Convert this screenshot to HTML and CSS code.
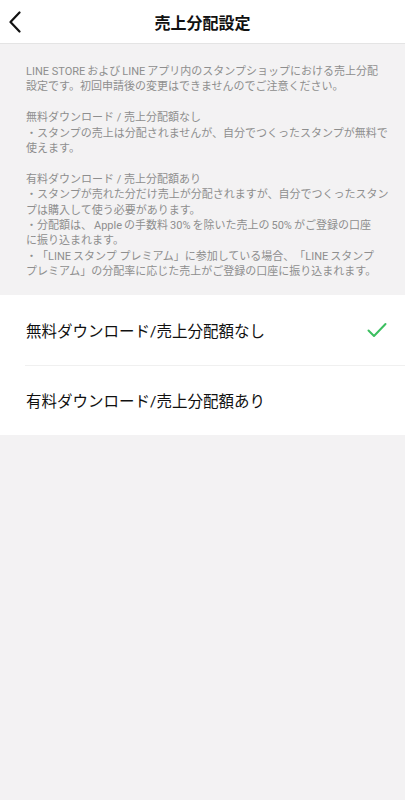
FILE: index.html
```html
<!DOCTYPE html>
<html lang="ja">
  <head>
    <meta name="viewport" content="width=device-width, initial-scale=1" />
    <link rel="stylesheet" href="styles.css">
  </head>
  <body>
    <header class="nav">
      <a class="nav-back" href="#">
        <svg width="14" height="22" viewBox="0 0 14 22">
          <path d="M11.5 1.5 L2.5 11 L11.5 20.5" fill="none" stroke="#111" stroke-width="2.2" stroke-linecap="round" stroke-linejoin="round" />
        </svg>
      </a>
      <h1 class="nav-title">売上分配設定</h1>
    </header>

    <div class="notice">
      <p><span class="lat first">LINE STORE</span>および<span class="lat">LINE</span>アプリ内のスタンプショップにおける売上分配<br>設定です。初回申請後の変更はできませんのでご注意ください。</p>
      <p>無料ダウンロード / 売上分配額なし<br>・スタンプの売上は分配されませんが、自分でつくったスタンプが無料で<br>使えます。</p>
      <p>有料ダウンロード / 売上分配額あり<br>・スタンプが売れた分だけ売上が分配されますが、自分でつくったスタン<br>プは購入して使う必要があります。<br>・分配額は、<span class="lat">Apple</span>の手数料<span class="lat">30%</span>を除いた売上の<span class="lat">50%</span>がご登録の口座<br>に振り込まれます。<br>・「<span class="lat first">LINE</span>スタンプ プレミアム」に参加している場合、「<span class="lat first">LINE</span>スタンプ<br>プレミアム」の分配率に応じた売上がご登録の口座に振り込まれます。</p>
    </div>

    <ul class="options">
      <li class="option">
        <span>無料ダウンロード/売上分配額なし</span>
        <svg class="check" width="20" height="16" viewBox="0 0 20 16">
          <path d="M1.5 8.5 L7 14 L18.5 2" fill="none" stroke="#3cbf60" stroke-width="2" stroke-linecap="round" stroke-linejoin="round" />
        </svg>
      </li>
      <li class="option">
        <span>有料ダウンロード/売上分配額あり</span>
      </li>
    </ul>
  </body>
</html>
```

FILE: styles.css
```css
html,
body {
  margin: 0;
  padding: 0;
  background: #f3f2f3;
  font-family: Roboto, "Noto Sans CJK JP", sans-serif;
}

.nav {
  height: 43px;
  background: #fff;
  border-bottom: 1.5px solid #e4e4e4;
  display: flex;
  align-items: center;
  justify-content: center;
  position: relative;
}

.nav-back {
  position: absolute;
  left: 8px;
  top: 11px;
  display: block;
  line-height: 0;
}

.nav-title {
  margin: 0;
  font-size: 16px;
  font-weight: bold;
  color: #111;
}

.notice {
  padding: 20px 24px 15px 26px;
  font-size: 11px;
  line-height: 15.4px;
  color: #8e8e8e;
  white-space: nowrap;
  text-spacing-trim: space-all;
}

.notice p {
  margin: 0 0 15.4px;
}

.notice p:last-child {
  margin-bottom: 0;
}

/* latin words get a little air next to kana */
.lat {
  margin: 0 2px;
}

.lat.first {
  margin-left: 0;
}

.options {
  list-style: none;
  margin: 0;
  padding: 0 0 0 25px;
  background: #fff;
}

.option {
  height: 70px;
  display: flex;
  align-items: center;
  justify-content: space-between;
  padding: 0 18px 0 1px;
  font-size: 15.5px;
  color: #111;
}

.option + .option {
  border-top: 1px solid #f0f0f0;
  height: 69px;
}
```
